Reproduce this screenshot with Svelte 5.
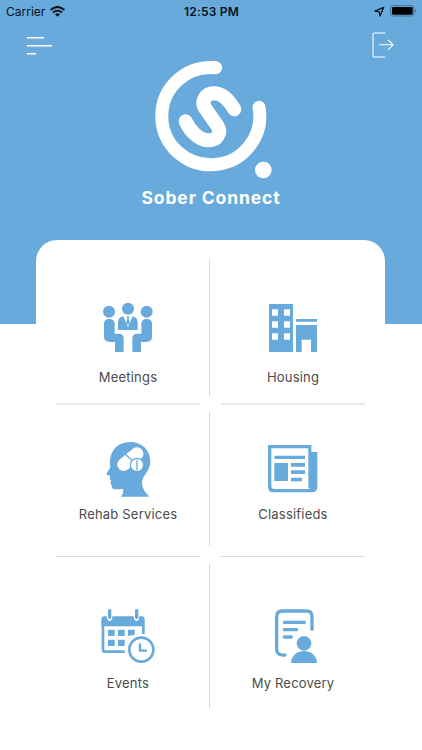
<script lang="ts">
  const rows = [
    { height: 137, top: 41, gap: 11, rule: null, items: ["Meetings", "Housing"] },
    { height: 134, top: 29, gap: 7, rule: { before: 7, size: 2, after: 7 }, items: ["Rehab Services", "Classifieds"] },
    { height: 144, top: 44, gap: 9, rule: { before: 10, size: 1, after: 7 }, items: ["Events", "My Recovery"] },
  ];
</script>

<div class="screen">
  <div class="status">
    <div class="carrier">
      <span>Carrier</span>
      <svg width="15" height="11" viewBox="0 0 45 33">
        <path d="M2 12Q22.500 -6 43 12" fill="none" stroke="#07121a" stroke-width="6" />
        <path d="M9 19.500Q22.500 8 36 19.500" fill="none" stroke="#07121a" stroke-width="5.500" />
        <path d="M15 25Q22.500 19 30 25L22.500 32Z" fill="#07121a" />
      </svg>
    </div>
    <div class="time">12:53 PM</div>
    <div class="power">
      <svg width="11" height="11" viewBox="0 0 33 33">
        <path d="M3 15L29 4L18 30L15.500 17.500Z" fill="none" stroke="#07121a" stroke-width="4" stroke-linejoin="round" />
      </svg>
      <svg width="27" height="12" viewBox="0 0 81 36">
        <rect x="2" y="2" width="70" height="31" rx="7" fill="none" stroke="#3c6483" stroke-width="2.500" />
        <rect x="6" y="6" width="62" height="23" rx="4" fill="#000" />
        <path d="M75 12Q80 17.500 75 23Z" fill="#3c6483" />
      </svg>
    </div>
  </div>

  <div class="toolbar">
    <svg width="26" height="20" viewBox="0 0 26 20" stroke="#fff" stroke-width="1.400">
      <path d="M0 1.700H17M0 9.700H25M0 17.700H9" />
    </svg>
    <svg width="22" height="26" viewBox="0 0 66 78" fill="none" stroke="#fff" stroke-width="3.200">
      <path d="M40 3H7Q3 3 3 7V71Q3 75 7 75H40M22 38.500H63M48 23.500L63 38.500L48 53.500" />
    </svg>
  </div>

  <div class="brand">
    <svg width="120" height="122" viewBox="69 26 360 366" fill="none" stroke="#fff" stroke-linecap="round">
      <path d="M257 52A147 146 0 1 0 387 171" stroke-width="39" />
      <path d="M313 177C299 153 277 129 252 129C226 129 212 154 225 173L262 226C276 249 261 270 236 270C207 270 180 242 167 213" stroke-width="42" />
      <circle cx="400" cy="359" r="25" fill="#fff" stroke="none" />
    </svg>
    <h1>Sober Connect</h1>
  </div>

  <main class="card">
    {#each rows as row}
      {#if row.rule}
        <div class="rules" style="padding: {row.rule.before}px 0 {row.rule.after}px">
          <hr class:soft={row.rule.size === 2} />
          <hr class:soft={row.rule.size === 2} />
        </div>
      {/if}
      <div class="row" style="height: {row.height}px">
        {#each row.items as name}
          <div class="cell" style="padding-top: {row.top}px; gap: {row.gap}px">
            {#if name === "Meetings"}
              <svg class="icon" viewBox="30 30 168 168">
                <circle cx="57" cy="65" r="18" />
                <circle cx="114" cy="56" r="18" />
                <circle cx="170" cy="65" r="18" />
                <path d="M42 102Q42 87 57 87Q74 87 74 102V131H86Q101 131 101 146V182Q101 186 97 186H79Q75 186 75 182V156H60Q42 156 42 139Z" />
                <path d="M186 102Q186 87 171 87Q154 87 154 102V131H142Q127 131 127 146V182Q127 186 131 186H149Q153 186 153 182V156H168Q186 156 186 139Z" />
                <path d="M84 120V98Q84 82 100 79L114 111L128 79Q143 82 143 98V120Z" />
                <path d="M110 79H118L116 85L119 98L114 106L109 98L112 85Z" />
              </svg>
            {:else if name === "Housing"}
              <svg class="icon" viewBox="45 30 168 168">
                <path fill-rule="evenodd" d="M57 42H129V186H57ZM66 58V77H84V58ZM102 58V77H120V58ZM66 94V113H84V94ZM102 94V113H120V94ZM66 130V149H84V130ZM102 130V149H120V130Z" />
                <path d="M138 87H201V95H138ZM138 105H201V186H183V149H155V186H138Z" />
              </svg>
            {:else if name === "Rehab Services"}
              <svg class="icon" viewBox="90 33 168 168">
                <path d="M153 200C160 190 162 182 158 176C145 178 135 179 129 176C124 173 126 166 123 162L121 156L124 152L119 148L121 138L111 134C108 132 110 129 112 127L121 111C115 70 137 36 181 36C218 36 241 63 241 94C241 124 215 138 216 160C217 176 227 190 238 200Z" />
                <g fill="#fff">
                  <rect x="139" y="71" width="84" height="33" rx="16.500" transform="rotate(-39 181 87.500)" stroke="#fff" stroke-width="6" />
                  <circle cx="201" cy="105" r="20" stroke="#67aadb" stroke-width="4" />
                </g>
                <path d="M166 73L187 92M201 89V121" fill="none" stroke="#67aadb" stroke-width="4" />
              </svg>
            {:else if name === "Classifieds"}
              <svg class="icon" viewBox="45 33 168 168">
                <path d="M54 45H184V66H202V171Q202 187 186 187H70Q54 187 54 171Z" />
                <path d="M64 55H175V171L179 177H73Q64 177 64 168Z" fill="#fff" />
                <path d="M73 77H165V87H73ZM73 99H114V153H73ZM123 99H165V110H123ZM123 121H165V132H123ZM123 143H156V154H123Z" />
              </svg>
            {:else if name === "Events"}
              <svg class="icon" viewBox="30 24 168 168">
                <path d="M34 79V59Q34 49 44 49H50Q51 63 59 63Q67 63 67 49H131Q132 63 140 63Q148 63 148 49H154Q164 49 164 59V79Z" />
                <path d="M39 77V151Q39 155 43 155H104M160 77V102" fill="none" stroke="#67aadb" stroke-width="8" />
                <path d="M59 32V52M140 32V52" fill="none" stroke="#67aadb" stroke-width="10" stroke-linecap="round" />
                <path d="M54 89H74V108H54ZM84 89H104V108H84ZM114 89H134V104Q121 107 114 108ZM54 119H74V138H54ZM84 119H104V138H84Z" />
                <circle cx="154" cy="149" r="43" fill="#fff" />
                <circle cx="154" cy="149" r="36" fill="#fff" stroke="#67aadb" stroke-width="8" />
                <path d="M150 133V152H168" fill="none" stroke="#67aadb" stroke-width="7" stroke-linecap="round" stroke-linejoin="round" />
              </svg>
            {:else}
              <svg class="icon" viewBox="60 24 168 168">
                <path d="M120 165Q95 167 95 148V50Q95 33 112 33H184Q201 33 201 50V88" fill="none" stroke="#67aadb" stroke-width="10" stroke-linecap="round" />
                <path d="M118 67H178M118 89H155M118 111H139" fill="none" stroke="#67aadb" stroke-width="10" stroke-linecap="round" />
                <circle cx="177" cy="130" r="22" />
                <path d="M138 189C140 141 214 141 216 189Z" />
              </svg>
            {/if}
            <span class="label">{name}</span>
          </div>
        {/each}
      </div>
    {/each}
  </main>
</div>

<style>
  :global(body) {
    margin: 0;
  }

  .screen {
    width: 422px;
    height: 750px;
    overflow: hidden;
    font-family: Inter, "Liberation Sans", sans-serif;
    background: linear-gradient(#67aadb 324px, #fff 324px);
  }

  .status {
    display: grid;
    grid-template-columns: 1fr auto 1fr;
    align-items: center;
    height: 22px;
    padding: 0 5px 0 6px;
    font-size: 12px;
    color: #07121a;
  }

  .carrier,
  .power {
    display: flex;
    align-items: center;
    gap: 5px;
  }

  .power {
    justify-content: flex-end;
  }

  .time {
    font-weight: 600;
    letter-spacing: 0.2px;
  }

  .toolbar {
    display: flex;
    justify-content: space-between;
    height: 32px;
    padding: 10px 28px 0 27px;
  }

  .toolbar svg:first-child {
    margin-top: 4px;
  }

  .brand {
    display: flex;
    flex-direction: column;
    align-items: center;
    height: 176px;
  }

  .brand svg {
    margin: -5px 0 0 4px;
  }

  h1 {
    margin: 4px 0 0;
    font-size: 17.5px;
    font-weight: 700;
    line-height: 26px;
    letter-spacing: 0.9px;
    white-space: nowrap;
    color: #fff;
  }

  .card {
    box-sizing: border-box;
    width: 349px;
    height: 510px;
    margin-left: 36px;
    padding: 19px 20px 0;
    border-radius: 21px 21px 0 0;
    background: #fff;
  }

  .row {
    display: grid;
    grid-template-columns: 144px 144px;
    column-gap: 21px;
    background: linear-gradient(#d9d9d9, #d9d9d9) 153px 0 / 1px 100% no-repeat;
  }

  .cell {
    box-sizing: border-box;
    display: flex;
    flex-direction: column;
    align-items: center;
  }

  .icon {
    width: 56px;
    height: 56px;
    flex: none;
    fill: #67aadb;
  }

  .label {
    font-size: 13px;
    line-height: 20px;
    letter-spacing: 0.2px;
    white-space: nowrap;
    color: #4b4b4b;
  }

  .rules {
    display: grid;
    grid-template-columns: 144px 144px;
    column-gap: 21px;
  }

  hr {
    width: 100%;
    height: 1px;
    margin: 0;
    border: 0;
    background: #dcdcdc;
  }

  hr.soft {
    height: 2px;
    background: #e9e9e9;
  }
</style>
